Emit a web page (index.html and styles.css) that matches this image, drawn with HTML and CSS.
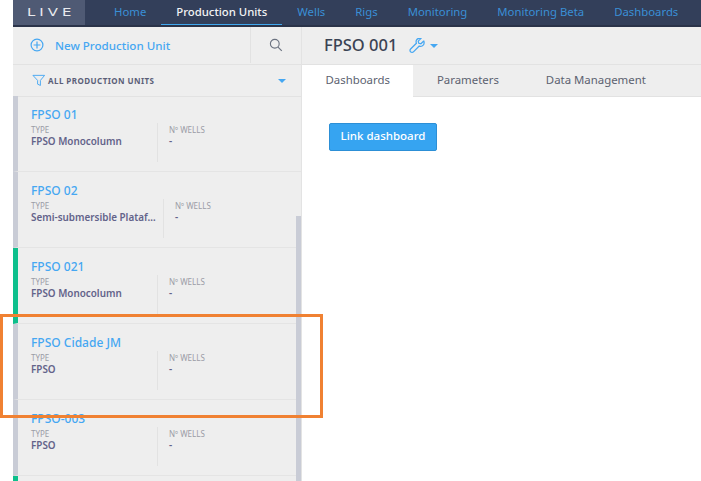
FILE: index.html
```html
<!DOCTYPE html>
<html lang="en">
  <head>
    <meta charset="UTF-8" />
    <title>Production Units</title>
    <link rel="stylesheet" href="styles.css">
  </head>
  <body>
    <div class="app">
      <nav class="topbar">
        <div class="logo"><span class="logo-text">LIVE</span></div>
        <div class="nav-links">
          <a class="nav-link">Home</a>
          <a class="nav-link active">Production Units</a>
          <a class="nav-link">Wells</a>
          <a class="nav-link">Rigs</a>
          <a class="nav-link">Monitoring</a>
          <a class="nav-link">Monitoring Beta</a>
          <a class="nav-link">Dashboards</a>
        </div>
      </nav>

      <div class="content">
        <aside class="sidebar">
          <div class="side-tools">
            <div class="new-unit">
              <svg class="plus-icon" width="14" height="14" viewBox="0 0 14 14">
                <circle cx="7" cy="7" r="5.9" />
                <path d="M7 3.6v6.8M3.6 7h6.8" />
              </svg>
              <span>New Production Unit</span>
            </div>
            <div class="search">
              <svg width="14" height="14" viewBox="0 0 15 15">
                <circle cx="6.2" cy="6.2" r="4.7" />
                <path d="M9.7 9.7l4 4" />
              </svg>
            </div>
          </div>
          <div class="filter">
            <svg width="14" height="13" viewBox="0 0 15 13">
              <path d="M1 1h12.5L9 6.4v5.4L6 10.4v-4z" />
            </svg>
            <span class="filter-label">ALL PRODUCTION UNITS</span>
            <span class="caret"></span>
          </div>
          <div class="unit-list">
            <div class="unit">
              <div class="unit-name">FPSO 01</div>
              <div class="unit-info">
                <div class="info-type">
                  <div class="info-label">TYPE</div>
                  <div class="info-value">FPSO Monocolumn</div>
                </div>
                <div class="info-wells">
                  <div class="info-label">Nº WELLS</div>
                  <div class="info-value">-</div>
                </div>
              </div>
            </div>
            <div class="unit">
              <div class="unit-name">FPSO 02</div>
              <div class="unit-info">
                <div class="info-type wide">
                  <div class="info-label">TYPE</div>
                  <div class="info-value">Semi-submersible Plataf…</div>
                </div>
                <div class="info-wells">
                  <div class="info-label">Nº WELLS</div>
                  <div class="info-value">-</div>
                </div>
              </div>
            </div>
            <div class="unit online">
              <div class="unit-name">FPSO 021</div>
              <div class="unit-info">
                <div class="info-type">
                  <div class="info-label">TYPE</div>
                  <div class="info-value">FPSO Monocolumn</div>
                </div>
                <div class="info-wells">
                  <div class="info-label">Nº WELLS</div>
                  <div class="info-value">-</div>
                </div>
              </div>
            </div>
            <div class="unit">
              <div class="unit-name">FPSO Cidade JM</div>
              <div class="unit-info">
                <div class="info-type">
                  <div class="info-label">TYPE</div>
                  <div class="info-value">FPSO</div>
                </div>
                <div class="info-wells">
                  <div class="info-label">Nº WELLS</div>
                  <div class="info-value">-</div>
                </div>
              </div>
            </div>
            <div class="unit">
              <div class="unit-name">FPSO-003</div>
              <div class="unit-info">
                <div class="info-type">
                  <div class="info-label">TYPE</div>
                  <div class="info-value">FPSO</div>
                </div>
                <div class="info-wells">
                  <div class="info-label">Nº WELLS</div>
                  <div class="info-value">-</div>
                </div>
              </div>
            </div>
            <div class="unit online"></div>
            <div class="scroll-thumb"></div>
          </div>
        </aside>

        <main class="main">
          <div class="title-bar">
            <h1>FPSO 001</h1>
            <svg class="wrench" width="16" height="16" viewBox="0 0 18 18">
              <path d="M16.3 3.6l-2.900 2.900-2.400-.6-.6-2.400L13.300.7c-2-.6-4.200.1-5 1.900-.5 1.200-.4 2.300 0 3.300L1.800 12.400c-.9.9-.9 2.300 0 3.200.9.9 2.300.9 3.200 0l6.500-6.500c1 .4 2.200.4 3.300-.1 1.800-.8 2.500-3.300 1.900-5.400z" />
            </svg>
            <span class="caret"></span>
          </div>
          <div class="tabs">
            <a class="tab active">Dashboards</a>
            <a class="tab">Parameters</a>
            <a class="tab">Data Management</a>
          </div>
          <div class="tab-body">
            <button class="link-btn" type="button">Link dashboard</button>
          </div>
        </main>
      </div>
    </div>
    <div class="highlight"></div>
  </body>
</html>
```

FILE: styles.css
```css
html,
body {
  height: 100%;
}

body {
  margin: 0;
  background-color: #ffffff;
  font-family: "Noto Sans", "Open Sans", sans-serif;
  overflow: hidden;
}

.app {
  margin-left: 13px;
  height: 481px;
  display: flex;
  flex-direction: column;
}

.topbar {
  height: 25px;
  display: flex;
  flex-shrink: 0;
  background-color: #333f5a;
  border-bottom: 2px solid #2a3349;
}

.logo {
  width: 72px;
  padding-left: 14px;
  box-sizing: border-box;
  background-color: #4f5a74;
  color: #e8eaee;
  font-size: 11px;
  font-family: "DejaVu Sans", sans-serif;
  letter-spacing: 3px;
  line-height: 25px;
}

.logo-text {
  display: inline-block;
  transform: scaleX(1.35);
  transform-origin: left center;
}

.nav-links {
  display: flex;
  padding-left: 14px;
}

.nav-link {
  padding: 0 15px;
  color: #3a8fd6;
  font-size: 11.35px;
  line-height: 24px;
  white-space: nowrap;
}

.nav-link.active {
  color: #f2f3f5;
  font-weight: 500;
  border-bottom: 1px solid #3fa7ee;
}

.content {
  flex: 1;
  display: flex;
  min-height: 0;
}

.sidebar {
  width: 289px;
  display: flex;
  flex-direction: column;
  flex-shrink: 0;
  background-color: #eeeeee;
  border-right: 1px solid #e3e3e3;
  box-sizing: border-box;
}

.side-tools {
  height: 38px;
  display: flex;
  flex-shrink: 0;
  padding-bottom: 1px;
  border-bottom: 1px solid #e2e2e2;
  box-sizing: border-box;
}

.new-unit {
  flex: 1;
  display: flex;
  align-items: center;
  gap: 11px;
  padding-left: 17px;
  color: #45a7f2;
  font-size: 11.6px;
  font-weight: 500;
}

.plus-icon {
  fill: none;
  stroke: #45a7f2;
  stroke-width: 1.2;
}

.search {
  width: 50px;
  display: flex;
  align-items: center;
  justify-content: center;
  border-left: 1px solid #e2e2e2;
}

.search svg {
  fill: none;
  stroke: #6b7280;
  stroke-width: 1.2;
}

.filter {
  height: 32px;
  display: flex;
  align-items: center;
  flex-shrink: 0;
  padding: 0 15px 0 19px;
  border-bottom: 1px solid #e2e2e2;
  box-sizing: border-box;
}

.filter svg {
  fill: none;
  stroke: #45a7f2;
  stroke-width: 1;
}

.filter-label {
  flex: 1;
  margin-left: 2px;
  color: #5b5f78;
  font-size: 8px;
  font-weight: 700;
  letter-spacing: 0.45px;
}

.caret {
  width: 0;
  height: 0;
  border-left: 4px solid transparent;
  border-right: 4px solid transparent;
  border-top: 4px solid #45a7f2;
}

.unit-list {
  flex: 1;
  position: relative;
  margin-top: -1px;
  overflow: hidden;
}

.unit {
  height: 64px;
  padding: 11px 0 0 13px;
  border-left: 5px solid #c9ccd6;
  border-bottom: 1px solid #e4e4e4;
}

.unit.online {
  border-left-color: #0dbf8c;
}

.unit-name {
  color: #45a7f2;
  font-size: 12px;
  font-weight: 500;
  line-height: 16px;
}

.unit-info {
  display: flex;
  height: 39px;
}

.info-type,
.info-wells {
  padding-top: 2px;
}

.info-type {
  width: 126px;
  border-right: 1px solid #e2e2e2;
  margin-right: 11px;
}

.info-type.wide {
  width: 132px;
}

.info-label {
  color: #9b9ca6;
  font-size: 8px;
  line-height: 10px;
}

.info-value {
  color: #63638a;
  font-size: 9.9px;
  font-weight: 600;
  line-height: 12px;
  white-space: nowrap;
}

.scroll-thumb {
  position: absolute;
  top: 120px;
  right: 0;
  bottom: 0;
  width: 5px;
  background-color: #c9ccd6;
}

.main {
  flex: 1;
  display: flex;
  flex-direction: column;
}

.title-bar {
  height: 38px;
  display: flex;
  align-items: center;
  flex-shrink: 0;
  padding-left: 22px;
  background-color: #eeeeee;
  border-bottom: 1px solid #e2e2e2;
  box-sizing: border-box;
}

.title-bar h1 {
  margin: 0 12px 2px 0;
  color: #3b4354;
  font-size: 16.5px;
  font-weight: 500;
}

.wrench {
  fill: none;
  stroke: #45a7f2;
  stroke-width: 1.4;
  margin-right: 5px;
}

.tabs {
  height: 32px;
  display: flex;
  flex-shrink: 0;
  background-color: #eeeeee;
  border-bottom: 1px solid #e2e2e2;
  box-sizing: border-box;
}

.tab {
  padding: 0 23.5px;
  color: #5c6270;
  font-size: 11.4px;
  line-height: 30px;
}

.tab.active {
  background-color: #ffffff;
  height: 32px;
  box-sizing: border-box;
}

.tab-body {
  flex: 1;
  padding: 26px 27px;
}

.link-btn {
  height: 28px;
  width: 108px;
  padding: 0 0 3px;
  background-color: #36a4f1;
  border: 1px solid #2c8fd6;
  border-radius: 2px;
  color: #ffffff;
  font-family: inherit;
  font-size: 11.5px;
  font-weight: 500;
}

.highlight {
  position: absolute;
  left: 0;
  top: 314px;
  width: 323px;
  height: 104px;
  border: 3px solid #f08132;
  box-sizing: border-box;
}
```
